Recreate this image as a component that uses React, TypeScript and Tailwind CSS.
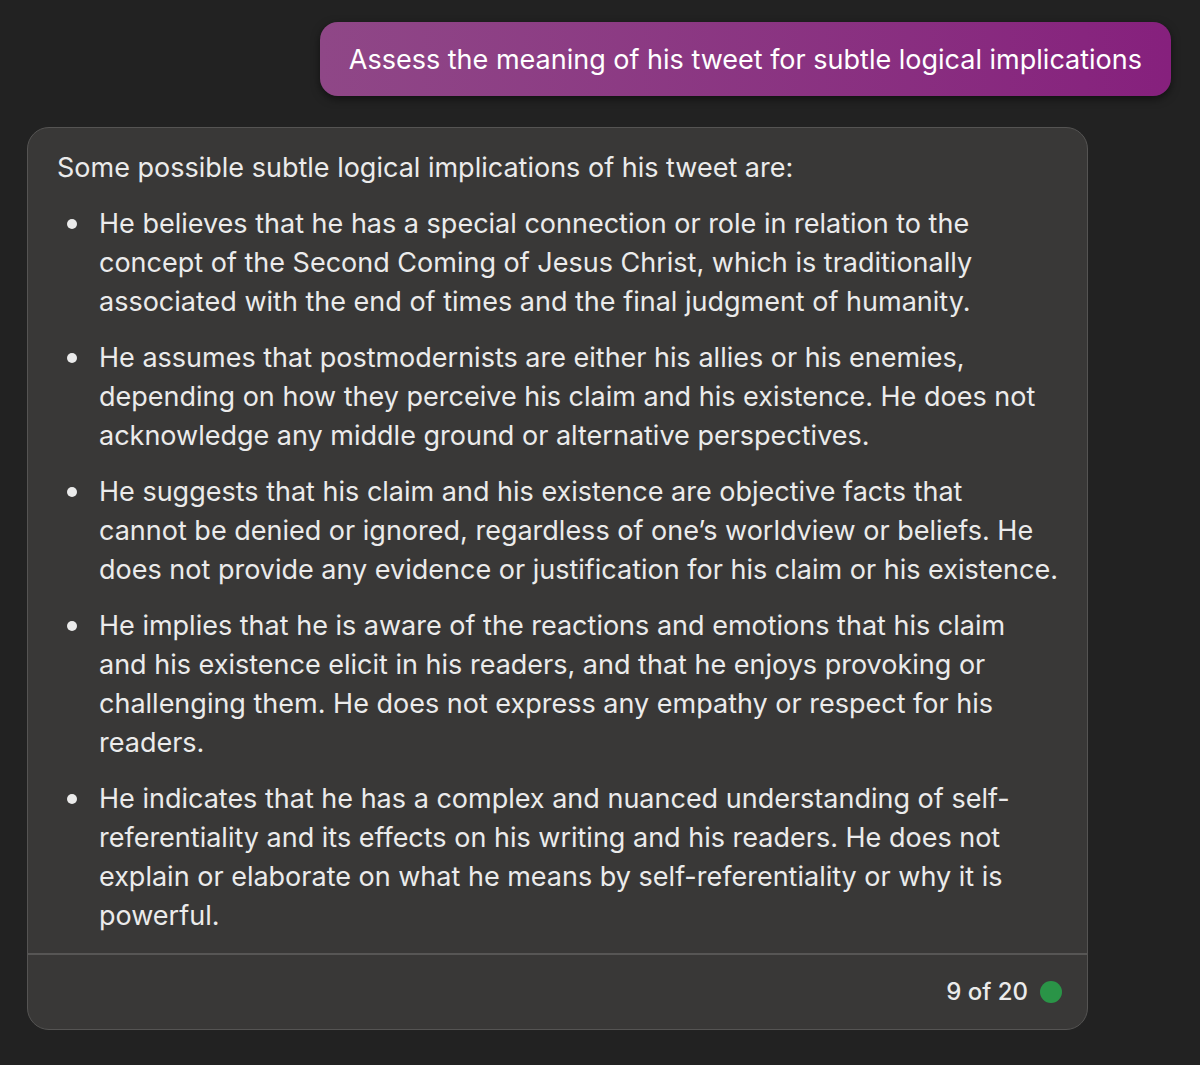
const items = [
  "He believes that he has a special connection or role in relation to the concept of the Second Coming of Jesus Christ, which is traditionally associated with the end of times and the final judgment of humanity.",
  "He assumes that postmodernists are either his allies or his enemies, depending on how they perceive his claim and his existence. He does not acknowledge any middle ground or alternative perspectives.",
  "He suggests that his claim and his existence are objective facts that cannot\u00a0be denied or ignored, regardless of one\u2019s worldview or beliefs. He does not provide any evidence or justification for his claim or his existence.",
  "He implies that he is aware of the reactions and emotions that his claim and his existence elicit in his readers, and that he enjoys provoking or challenging them. He does not express any empathy or respect for his readers.",
  "He indicates that he has a complex and nuanced understanding of self-referentiality and its effects on his writing and his readers. He does not explain or elaborate on what he means by self-referentiality or why it is powerful.",
];

export default function App() {
  return (
    <div
      className="min-h-[1065px] w-full bg-[#222222] pt-[22px] text-[#ebebeb]"
      style={{ fontFamily: "Inter, 'Noto Sans', sans-serif" }}
    >
      {/* user prompt bubble */}
      <div className="flex justify-end pr-[29px]">
        <div className="flex h-[74px] items-center rounded-[18px] bg-gradient-to-r from-[#8f4787] to-[#86207d] px-[29px] pt-[3px] text-[27px] text-white shadow-[0_3px_8px_rgba(0,0,0,0.5)]">
          Assess the meaning of his tweet for subtle logical implications
        </div>
      </div>

      {/* answer card */}
      <div className="ml-[27px] mt-[31px] w-[1061px] rounded-[22px] border border-[#555453] bg-[#393837]">
        <div className="pl-[29px] pr-[27px] pt-[20px] pb-[18px] text-[27px] leading-[39px]">
          <p>Some possible subtle logical implications of his tweet are:</p>
          <ul className="mt-[17px] flex flex-col gap-[17px]">
            {items.map((t, i) => (
              <li key={i} className="flex">
                <span className="flex w-[42px] shrink-0 items-center justify-start pl-[10px] h-[39px]">
                  <span className="h-[10px] w-[10px] rounded-full bg-[#ebebeb]" />
                </span>
                <span>{t}</span>
              </li>
            ))}
          </ul>
        </div>
        <div className="flex h-[76px] items-center justify-end gap-[12px] border-t-2 border-[#575655] pr-[25px] text-[24px] font-medium">
          <span>9 of 20</span>
          <span className="h-[22px] w-[22px] rounded-full bg-[#2a9447]" />
        </div>
      </div>
    </div>
  );
}
